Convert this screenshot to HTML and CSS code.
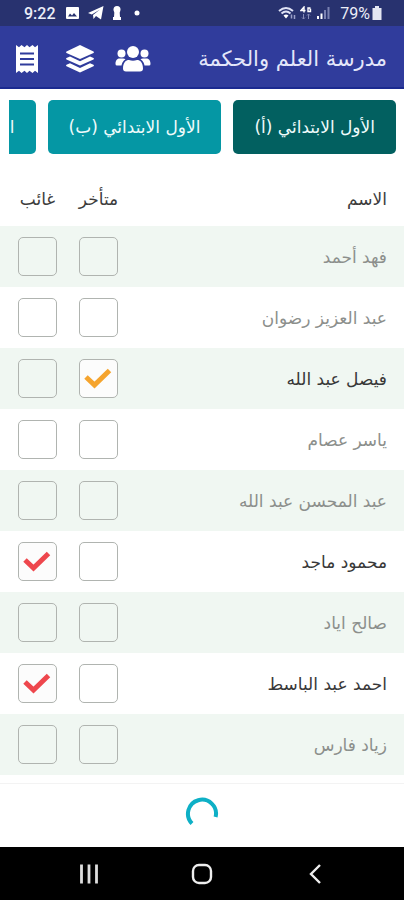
FILE: index.html
```
<!DOCTYPE html>
<html lang="ar" dir="rtl">
<head>
<meta charset="utf-8">
<meta name="viewport" content="width=device-width, initial-scale=1">
<title>مدرسة العلم والحكمة</title>
<link rel="stylesheet" href="styles.css">
</head>
<body>
<div class="status" dir="ltr">
  <div class="status-group">
    <span class="clock">9:22</span>
    <svg width="16" height="14" viewBox="0 0 16 14"><rect x="2" y="1" width="13" height="12" rx="1" fill="#fff"/><path d="M4 10.500l2-3 2 2 2-2.500 3 3.500z" fill="#28326f"/></svg>
    <svg width="16" height="14" viewBox="0 0 16 14"><path d="M0 7L15.500 0 13 13.500 8 10 5.500 13 5 9 12 3.500 3.800 8.500z" fill="#fff"/></svg>
    <svg width="10" height="14" viewBox="0 0 10 14"><circle cx="5" cy="3.500" r="3.500" fill="#fff"/><path d="M2.500 4h5l.5 7h1v3H1v-3h1z" fill="#fff"/></svg>
    <svg class="dot" width="6" height="14" viewBox="0 0 6 14"><circle cx="3" cy="7" r="2.500" fill="#fff"/></svg>
  </div>
  <div class="status-group status-end">
    <svg width="18" height="14" viewBox="0 0 18 14" fill="none"><path d="M1 5q7-6 14 0M3.500 7.500q4.500-4 9 0" stroke="#dfe2f5" stroke-width="2"/><path d="M5.500 9.500q2.500-2 5 0L8 12.500z" fill="#fff"/><path d="M13.500 12.500V8.500M16.500 9v4" stroke="#9aa0c8" stroke-width="1.500"/></svg>
    <svg width="12" height="14" viewBox="0 0 12 14" fill="none"><path d="M4 6.500V1L1 4.500h4.500M10.500 2H8v3.500h2.500v-2H9.500" stroke="#fff" stroke-width="1.400"/><path d="M3.500 8v5M2 11.500l1.500 1.500L5 11.500M8.500 13V8M7 9.500L8.500 8 10 9.500" stroke="#858bb8"/></svg>
    <svg width="14" height="14" viewBox="0 0 14 14"><path d="M1 10h2v3H1zM4.500 7.500h2V13h-2z" fill="#fff"/><path d="M8 4h2v9H8zM11.500 1h2v12h-2z" fill="#7980b0"/></svg>
    <span class="battery">79%</span>
    <svg width="10" height="14" viewBox="0 0 10 14"><path d="M3 0h4v2h2.500v12h-9V2H3z" fill="#e4e6f2"/></svg>
  </div>
</div>
<header class="appbar">
  <h1>مدرسة العلم والحكمة</h1>
  <div class="actions">
    <button type="button" aria-label="الطلاب"><svg width="36" height="28" viewBox="0 0 36 28" fill="#fff"><circle cx="18" cy="7" r="6"/><path d="M8 23.500c0-6 3-8.500 6-8.500q4 1.500 8 0c3 0 6 2.500 6 8.500q0 3-3 3H11q-3 0-3-3z"/><circle cx="6.500" cy="8.500" r="4"/><circle cx="29.500" cy="8.500" r="4"/><path d="M10.500 14.200Q7 16.500 6.500 20.500H2q-1.500 0-1.500-1.500c0-4 2-5.500 4-5.500h3.500q1.500 0 2.500.7zM25.500 14.200q3.500 2.300 4 6.300H34q1.500 0 1.500-1.500c0-4-2-5.500-4-5.500H28q-1.500 0-2.500.7z"/></svg></button>
    <button type="button" aria-label="الصفوف"><svg width="30" height="30" viewBox="0 0 30 30" fill="#fff"><path d="M15 1l13.500 6.500q1 .7 0 1.400L15 15 1.500 8.900q-1-.7 0-1.400z"/><path d="M5 12.500l10 4.800 10-4.800 3.500 1.600q1 .7 0 1.400L15 21.600 1.500 15.500q-1-.7 0-1.400z"/><path d="M5 19.200l10 4.800 10-4.800 3.500 1.600q1 .7 0 1.400L15 28.500 1.500 22.200q-1-.7 0-1.400z"/></svg></button>
    <button type="button" aria-label="السجل"><svg width="24" height="30" viewBox="0 0 24 30"><path d="M1 1l3 2.200L6.500 1 9.500 3.200 12 1l2.500 2.200L17.500 1 20 3.200 23 1v28l-3-2.200-2.500 2.200-3-2.200L12 29l-2.500-2.200L6.500 29 4 26.800 1 29z" fill="#fff"/><path d="M5 9.500h14M5 15h14M5 20.500h14" stroke="#303c9c" stroke-width="1.800"/></svg></button>
  </div>
</header>
<main>
  <nav class="tabs">
    <button type="button" class="tab active">الأول الابتدائي (أ)</button>
    <button type="button" class="tab">الأول الابتدائي (ب)</button>
    <button type="button" class="tab">الأول الابتدائي (ج)</button>
  </nav>
  <table class="roster">
    <thead><tr><th scope="col" class="name">الاسم</th><th scope="col" class="mark">متأخر</th><th scope="col" class="mark last">غائب</th></tr></thead>
    <tbody>
      <tr><td class="name">فهد أحمد</td><td><label class="check late"><input type="checkbox" aria-label="فهد أحمد متأخر"><svg viewBox="0 0 28 24"><path d="M1 10l8.500 8L24.500 3.500"/></svg></label></td><td class="last"><label class="check absent"><input type="checkbox" aria-label="فهد أحمد غائب"><svg viewBox="0 0 28 24"><path d="M1 10l8.500 8L24.500 3.500"/></svg></label></td></tr>
      <tr><td class="name">عبد العزيز رضوان</td><td><label class="check late"><input type="checkbox" aria-label="عبد العزيز رضوان متأخر"><svg viewBox="0 0 28 24"><path d="M1 10l8.500 8L24.500 3.500"/></svg></label></td><td class="last"><label class="check absent"><input type="checkbox" aria-label="عبد العزيز رضوان غائب"><svg viewBox="0 0 28 24"><path d="M1 10l8.500 8L24.500 3.500"/></svg></label></td></tr>
      <tr class="marked"><td class="name">فيصل عبد الله</td><td><label class="check late"><input type="checkbox" checked aria-label="فيصل عبد الله متأخر"><svg viewBox="0 0 28 24"><path d="M1 10l8.500 8L24.500 3.500"/></svg></label></td><td class="last"><label class="check absent"><input type="checkbox" aria-label="فيصل عبد الله غائب"><svg viewBox="0 0 28 24"><path d="M1 10l8.500 8L24.500 3.500"/></svg></label></td></tr>
      <tr><td class="name">ياسر عصام</td><td><label class="check late"><input type="checkbox" aria-label="ياسر عصام متأخر"><svg viewBox="0 0 28 24"><path d="M1 10l8.500 8L24.500 3.500"/></svg></label></td><td class="last"><label class="check absent"><input type="checkbox" aria-label="ياسر عصام غائب"><svg viewBox="0 0 28 24"><path d="M1 10l8.500 8L24.500 3.500"/></svg></label></td></tr>
      <tr><td class="name">عبد المحسن عبد الله</td><td><label class="check late"><input type="checkbox" aria-label="عبد المحسن عبد الله متأخر"><svg viewBox="0 0 28 24"><path d="M1 10l8.500 8L24.500 3.500"/></svg></label></td><td class="last"><label class="check absent"><input type="checkbox" aria-label="عبد المحسن عبد الله غائب"><svg viewBox="0 0 28 24"><path d="M1 10l8.500 8L24.500 3.500"/></svg></label></td></tr>
      <tr class="marked"><td class="name">محمود ماجد</td><td><label class="check late"><input type="checkbox" aria-label="محمود ماجد متأخر"><svg viewBox="0 0 28 24"><path d="M1 10l8.500 8L24.500 3.500"/></svg></label></td><td class="last"><label class="check absent"><input type="checkbox" checked aria-label="محمود ماجد غائب"><svg viewBox="0 0 28 24"><path d="M1 10l8.500 8L24.500 3.500"/></svg></label></td></tr>
      <tr><td class="name">صالح اياد</td><td><label class="check late"><input type="checkbox" aria-label="صالح اياد متأخر"><svg viewBox="0 0 28 24"><path d="M1 10l8.500 8L24.500 3.500"/></svg></label></td><td class="last"><label class="check absent"><input type="checkbox" aria-label="صالح اياد غائب"><svg viewBox="0 0 28 24"><path d="M1 10l8.500 8L24.500 3.500"/></svg></label></td></tr>
      <tr class="marked"><td class="name">احمد عبد الباسط</td><td><label class="check late"><input type="checkbox" aria-label="احمد عبد الباسط متأخر"><svg viewBox="0 0 28 24"><path d="M1 10l8.500 8L24.500 3.500"/></svg></label></td><td class="last"><label class="check absent"><input type="checkbox" checked aria-label="احمد عبد الباسط غائب"><svg viewBox="0 0 28 24"><path d="M1 10l8.500 8L24.500 3.500"/></svg></label></td></tr>
      <tr><td class="name">زياد فارس</td><td><label class="check late"><input type="checkbox" aria-label="زياد فارس متأخر"><svg viewBox="0 0 28 24"><path d="M1 10l8.500 8L24.500 3.500"/></svg></label></td><td class="last"><label class="check absent"><input type="checkbox" aria-label="زياد فارس غائب"><svg viewBox="0 0 28 24"><path d="M1 10l8.500 8L24.500 3.500"/></svg></label></td></tr>
    </tbody>
  </table>
  <div class="loading" role="status" aria-label="جار التحميل">
    <svg width="34" height="34" viewBox="0 0 34 34" fill="none"><path d="M7 26.500A14 14 0 1 1 30.600 20" stroke="#0eb0c6" stroke-width="4"/></svg>
  </div>
</main>
<nav class="system" dir="ltr">
  <button type="button" aria-label="التطبيقات"><svg width="24" height="24" viewBox="0 0 24 24"><path d="M4.500 2.500v19M12 2.500v19M19.500 2.500v19" stroke="#ddd" stroke-width="2.800"/></svg></button>
  <button type="button" aria-label="الرئيسية"><svg width="24" height="24" viewBox="0 0 24 24"><rect x="3" y="3" width="18" height="18" rx="6" fill="none" stroke="#eee" stroke-width="2.400"/></svg></button>
  <button type="button" aria-label="رجوع"><svg width="24" height="24" viewBox="0 0 24 24"><path d="M17 3L8 12l9 9" fill="none" stroke="#eee" stroke-width="2.400"/></svg></button>
</nav>
</body>
</html>
```
FILE: styles.css
```
* { box-sizing: border-box; }
body {
  margin: 0;
  min-height: 100vh;
  display: flex;
  flex-direction: column;
  background: #fff;
  color: #3c3c3c;
  font-family: "DejaVu Sans", sans-serif;
  font-size: 17px;
}
button { margin: 0; padding: 0; border: 0; background: none; font: inherit; }
svg { display: block; }

.status {
  display: flex;
  justify-content: space-between;
  align-items: center;
  height: 26px;
  padding: 0 22px 0 24px;
  background: #28326f;
  color: #eceef8;
  font-family: Roboto, sans-serif;
  font-size: 16px;
}
.status-group { display: flex; align-items: center; gap: 8px; }
.status-end { gap: 4px; }
.clock { font-weight: 500; }
.dot { margin-left: 4px; }
.battery { margin: 0 -2px 0 6px; }

.appbar {
  display: flex;
  justify-content: space-between;
  align-items: center;
  height: 63px;
  padding: 4px 17px 0 9px;
  background: #303c9c;
  border-bottom: 2px solid #1b2a90;
  color: #e4e7fa;
}
.appbar h1 { margin: 0; font-size: 21px; font-weight: 400; line-height: 28px; }
.actions { display: flex; align-items: center; gap: 17px; }
.actions button { display: grid; place-items: center; width: 36px; }

main { flex: 1; display: flex; flex-direction: column; }
.tabs {
  display: flex;
  gap: 12px;
  margin: 11px 8px 4px 9px;
  overflow: hidden;
}
.tab {
  flex: none;
  height: 54px;
  padding: 0 21px;
  border-radius: 5px;
  background: #0597a4;
  color: #effbfb;
  font-size: 17px;
}
.tab.active { background: #026060; }

.roster { width: 100%; border-collapse: collapse; }
.roster tr { height: 61px; }
.roster thead tr { height: 68px; }
.roster th, .roster td { padding: 0; font-weight: 400; }
.roster th { padding-top: 14px; vertical-align: middle; }
.roster .name { padding-right: 17px; text-align: right; }
.roster .mark { width: 61px; text-align: center; }
.roster .mark.last { width: 68px; }
.roster .last { padding-left: 7px; }
.roster tbody .name { color: #8c8f8c; }
.roster tbody .marked .name { color: #383838; }
.roster tbody tr:nth-child(odd) { background: #f0f7f2; }

.check { display: grid; width: 39px; margin: 0 auto; }
.check input {
  grid-area: 1 / 1;
  appearance: none;
  width: 39px;
  height: 39px;
  margin: 0;
  border: 1px solid #b0b4b0;
  border-radius: 5px;
}
.check input:checked { background: #fcfcfc; }
.check svg {
  grid-area: 1 / 1;
  place-self: center;
  width: 28px;
  height: 24px;
  overflow: visible;
  fill: none;
  stroke-width: 5;
  visibility: hidden;
  pointer-events: none;
}
.check input:checked + svg { visibility: visible; }
.late svg { stroke: #f5a42e; }
.absent svg { stroke: #ee474d; }

.loading {
  flex: 1;
  display: grid;
  place-items: center;
  margin-top: 8px;
  padding-bottom: 3px;
  border-top: 1px solid #f3f3f3;
}
.system {
  display: flex;
  justify-content: space-around;
  align-items: center;
  height: 53px;
  padding: 0 32px;
  background: #000;
}
```
